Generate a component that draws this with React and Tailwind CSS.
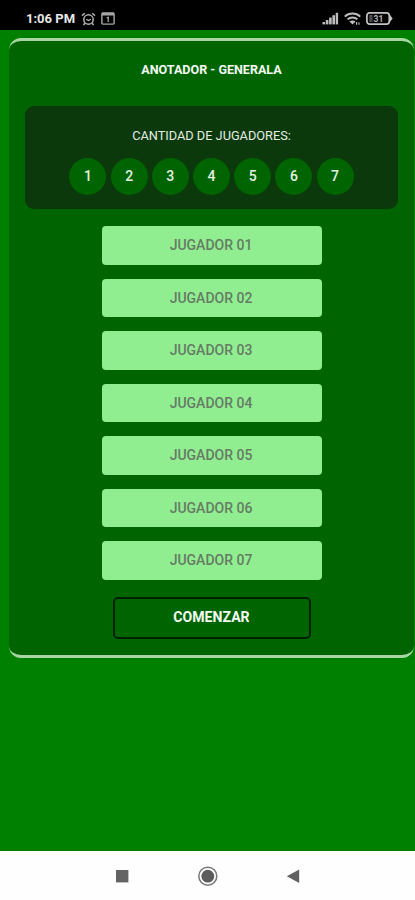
import { useState } from "react";

const MAX_PLAYERS = 7;

const PLAYERS = Array.from({ length: MAX_PLAYERS }, (_, i) => i + 1);

function AlarmIcon() {
  return (
    <svg width="15" height="14" viewBox="0 0 15 14" fill="none" stroke="#b4b4b4" strokeWidth="1.5">
      <circle cx="7.5" cy="7.5" r="4.7" />
      <path d="M1 3.6 3.8 1.2M14 3.6 11.2 1.2M3.8 11.2 2.4 13M11.2 11.2 12.6 13" />
      <path d="M5.2 7.2 7.5 8.6 9.8 7.2" strokeWidth="1.3" />
    </svg>
  );
}

function CalendarIcon() {
  return (
    <svg width="14" height="13" viewBox="0 0 14 13" fill="none" stroke="#a8a8a8">
      <rect x="0.9" y="0.9" width="12.2" height="11.2" rx="1" strokeWidth="1.4" />
      <path d="M1 2.2H13" strokeWidth="2.6" />
      <path d="M5.6 6 7.2 5.2V10" strokeWidth="1.3" />
    </svg>
  );
}

function SignalIcon() {
  return (
    <svg width="17" height="13" viewBox="0 0 17 13" fill="#bdbdbd">
      <rect x="0.5" y="10" width="2.6" height="2.4" />
      <rect x="3.8" y="8" width="2.6" height="4.4" />
      <rect x="7.1" y="5.6" width="2.6" height="6.8" />
      <rect x="10.4" y="3.2" width="2.6" height="9.2" />
      <rect x="13.7" y="0.8" width="2.4" height="11.6" />
    </svg>
  );
}

function WifiIcon() {
  return (
    <svg width="17" height="13" viewBox="0 0 17 13" fill="none" stroke="#bdbdbd" strokeWidth="2">
      <path d="M0.8 4.6C5 0.6 12 0.6 16.2 4.6" />
      <path d="M3.6 7.4C6.2 4.9 10.8 4.9 13.4 7.4" />
      <path d="M5.4 9.6C7.2 8 9.8 8 11.6 9.6L8.5 12.6Z" fill="#bdbdbd" stroke="none" />
      <path d="M12.6 10V12.8M15 10.6V12.8" strokeWidth="1.2" />
    </svg>
  );
}

function BatteryIcon() {
  return (
    <svg width="27" height="13" viewBox="0 0 27 13">
      <rect x="0.9" y="0.9" width="22.4" height="11.2" rx="2.8" fill="none" stroke="#c4c4c4" strokeWidth="1.7" />
      <path d="M23.6 2.6 26.6 6.5 23.6 10.4Z" fill="#c4c4c4" />
      <rect x="3.2" y="3" width="3.4" height="7" fill="#4a4a4a" />
      <text
        x="12.4"
        y="9.6"
        textAnchor="middle"
        fontSize="8.5"
        fontWeight="700"
        fontFamily="Roboto, sans-serif"
        fill="#b4b4b4"
      >
        31
      </text>
    </svg>
  );
}

function StatusBar() {
  return (
    <div className="flex h-[29.5px] shrink-0 items-center bg-black pl-[26px] pr-[22px] pt-[8px]">
      <span className="w-[55px] whitespace-nowrap text-[13px] font-bold leading-4 text-[#e8e8e8]">
        1:06 PM
      </span>
      <AlarmIcon />
      <div className="ml-[5px]">
        <CalendarIcon />
      </div>
      <div className="ml-auto flex items-center">
        <SignalIcon />
        <div className="ml-[5px] mr-[5px]">
          <WifiIcon />
        </div>
        <BatteryIcon />
      </div>
    </div>
  );
}

function NavBar() {
  return (
    <div className="flex h-[49px] shrink-0 items-center justify-center bg-[#fefefe]">
      <svg width="192" height="22" viewBox="0 0 192 22">
        <rect x="4" y="5" width="12.4" height="12.4" fill="#636363" />
        <circle cx="95.8" cy="11.2" r="9" fill="none" stroke="#777" strokeWidth="1.5" />
        <circle cx="95.8" cy="11.2" r="6.4" fill="#5c5c5c" />
        <path d="M174.8 11.2 187.2 4.4V18Z" fill="#606060" />
      </svg>
    </div>
  );
}

function App() {
  const [count, setCount] = useState(MAX_PLAYERS);
  const [names, setNames] = useState({});

  const handleName = (player, value) => {
    setNames((prev) => ({ ...prev, [player]: value }));
  };

  return (
    <div className="flex h-[900px] w-[415px] flex-col overflow-hidden bg-[#008000] font-[Roboto,sans-serif]">
      <StatusBar />

      <main className="flex-1 pl-[9px] pr-px pt-2">
        <div className="flex h-[620px] flex-col items-center rounded-xl border-y-[3px] border-[#a9d5a5] bg-[#006400] px-4">
          <h1 className="mt-[21px] text-[12.55px] font-bold leading-4 text-[#f4faf4]">
            ANOTADOR - GENERALA
          </h1>

          {/* Player count */}
          <section className="mt-7 flex h-[103px] w-full flex-col items-center rounded-[9px] bg-[#0b390b] pt-[22px]">
            <p className="text-[12.75px] leading-4 text-[#e3ece3]">CANTIDAD DE JUGADORES:</p>
            <div className="mt-[14px] flex gap-[4.2px]">
              {PLAYERS.map((n) => (
                <button
                  key={n}
                  onClick={() => setCount(n)}
                  className="size-[37px] rounded-full bg-[#006400] pt-px text-[14px] font-medium text-[#e3f2e3]"
                >
                  {n}
                </button>
              ))}
            </div>
          </section>

          {/* Player names */}
          <div className="mt-[17.5px] flex flex-col gap-[14px]">
            {PLAYERS.slice(0, count).map((n) => (
              <input
                key={n}
                type="text"
                placeholder={`JUGADOR 0${n}`}
                value={names[n] || ""}
                onChange={(e) => handleName(n, e.target.value)}
                className="h-[38.5px] w-[220px] rounded-[4px] bg-[#90ee90] pr-px text-center text-[14px] font-medium text-[#333] placeholder:text-[#667b66] focus:outline-none"
              />
            ))}
          </div>

          <button className="mt-[17px] h-[42px] w-[198px] shrink-0 rounded-[5px] border-2 border-[#002000] text-[14.1px] font-bold text-[#f4faf4]">
            COMENZAR
          </button>
        </div>
      </main>

      <NavBar />
    </div>
  );
}

export default App;
